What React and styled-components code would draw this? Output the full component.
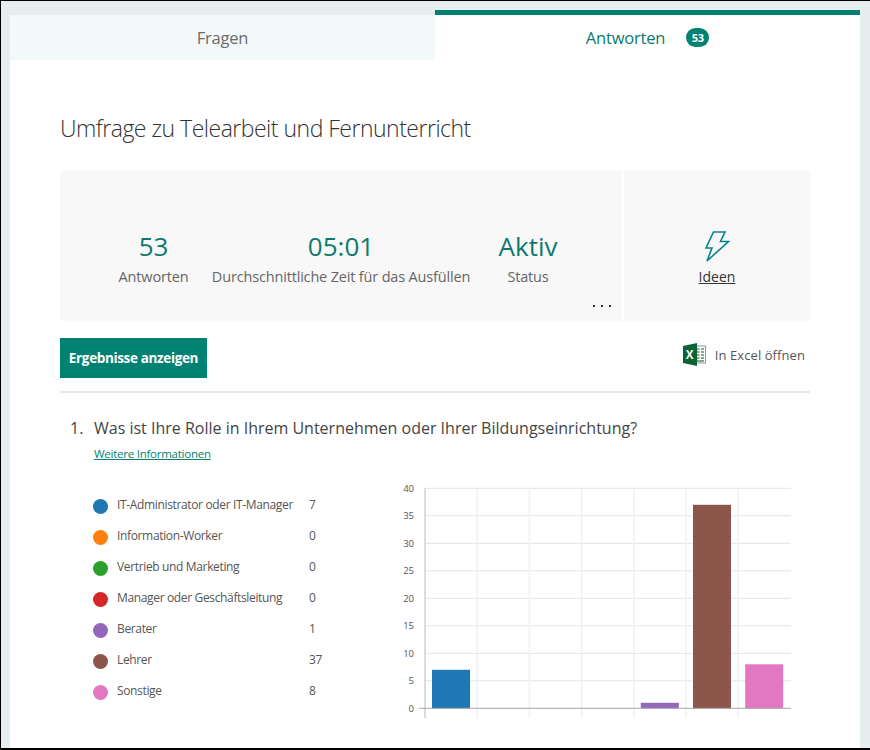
import React from 'react';
import styled, { createGlobalStyle } from 'styled-components';

const TEAL = '#008272';

const GlobalStyle = createGlobalStyle`
  html, body {
    margin: 0;
    padding: 0;
    height: 100%;
    overflow: hidden;
    background: #e6eef0;
  }
  * {
    box-sizing: border-box;
  }
`;

const Page = styled.div`
  width: 870px;
  height: 750px;
  overflow: hidden;
  padding: 9px 10px 0 9px;
  background: #e6eef0;
  border-top: 1px solid #000;
  border-left: 1px solid #000;
  border-bottom: 2px solid #000;
  font-family: 'Open Sans', 'Noto Sans', sans-serif;
  color: #333;
`;

const Tabs = styled.div`
  display: flex;
  height: 50px;
  align-items: flex-end;
`;

const Tab = styled.div`
  flex: 1;
  display: flex;
  align-items: center;
  justify-content: center;
  gap: 21px;
  height: ${(p) => (p.$active ? '50px' : '45px')};
  background: ${(p) => (p.$active ? '#fff' : '#f3f8f8')};
  border-top: ${(p) => (p.$active ? `5px solid ${TEAL}` : 'none')};
  color: ${(p) => (p.$active ? '#0d7a6d' : '#6b6b6b')};
  font-size: 16.5px;
  letter-spacing: -0.2px;
`;

const Badge = styled.span`
  width: 23px;
  height: 19px;
  border-radius: 10px;
  background: ${TEAL};
  color: #fff;
  font-size: 11px;
  font-weight: 700;
  letter-spacing: -0.3px;
  display: flex;
  align-items: center;
  justify-content: center;
`;

const Card = styled.main`
  background: #fff;
  height: 690px;
  padding: 51px 50px 0;
`;

const Title = styled.h1`
  margin: 0;
  font-size: 23px;
  font-weight: 300;
  line-height: 34px;
  letter-spacing: -0.5px;
  color: #333;
`;

const Summary = styled.section`
  display: flex;
  gap: 2px;
  height: 150px;
  margin-top: 26px;
`;

const Stats = styled.div`
  position: relative;
  width: 562px;
  background: #f8f8f8;
  display: flex;
  padding-top: 57px;
`;

const Stat = styled.div`
  width: ${(p) => p.$w}px;
  display: flex;
  flex-direction: column;
  align-items: center;
  white-space: nowrap;
`;

const StatValue = styled.div`
  font-size: 26px;
  line-height: 36px;
  color: #0d7a6d;
`;

const StatLabel = styled.div`
  font-size: 14.5px;
  line-height: 20px;
  margin-top: 3px;
  letter-spacing: -0.17px;
  color: #666;
`;

const More = styled.span`
  position: absolute;
  right: 11px;
  bottom: 14px;
  display: flex;
  gap: 6px;
  & i {
    width: 2px;
    height: 2px;
    background: #333;
  }
`;

const Ideas = styled.div`
  flex: 1;
  background: #f8f8f8;
  display: flex;
  flex-direction: column;
  align-items: center;
  padding-top: 59px;
`;

const IdeasLabel = styled.a`
  font-size: 14px;
  line-height: 18px;
  margin-top: 6px;
  color: #333;
  text-decoration: underline;
`;

const ActionRow = styled.div`
  display: flex;
  justify-content: space-between;
  align-items: center;
  height: 72px;
  padding-top: 17px;
  padding-bottom: 14px;
  border-bottom: 2px solid #e6e6e6;
`;

const PrimaryButton = styled.button`
  width: 147px;
  height: 40px;
  border: none;
  background: ${TEAL};
  color: #fff;
  font-family: inherit;
  font-size: 13.5px;
  font-weight: 700;
  letter-spacing: -0.35px;
  padding: 0;
`;

const ExcelLink = styled.div`
  display: flex;
  align-items: center;
  gap: 9px;
  margin-top: -6px;
  padding-right: 5px;
  font-size: 13px;
  letter-spacing: 0.08px;
  color: #555;
`;

const Question = styled.section`
  padding: 23px 0 0 10px;
`;

const QuestionTitle = styled.div`
  display: flex;
  font-size: 16px;
  line-height: 24px;
  color: #444;
`;

const QuestionNumber = styled.span`
  width: 24px;
`;

const MoreInfo = styled.a`
  display: block;
  margin: 6px 0 0 24px;
  font-size: 11.5px;
  line-height: 16px;
  letter-spacing: -0.25px;
  color: ${TEAL};
  text-decoration: underline;
`;

const Results = styled.div`
  display: flex;
  margin-top: 10px;
`;

const Legend = styled.ul`
  list-style: none;
  margin: 0;
  padding: 17px 0 0 23px;
  width: 318px;
`;

const LegendRow = styled.li`
  display: flex;
  align-items: center;
  height: 31px;
  font-size: 12px;
  letter-spacing: -0.35px;
  color: #555;
`;

const Dot = styled.span`
  width: 15px;
  height: 15px;
  border-radius: 50%;
  margin: 3px 9px 0 0;
  background: ${(p) => p.$color};
  flex: none;
`;

const LegendName = styled.span`
  width: 192px;
  white-space: nowrap;
`;

const ChartSvg = styled.svg`
  display: block;
  flex: none;
  margin-top: 8px;
`;

const ROLES = [
  { name: 'IT-Administrator oder IT-Manager', value: 7, color: '#1f77b4' },
  { name: 'Information-Worker', value: 0, color: '#ff7f0e' },
  { name: 'Vertrieb und Marketing', value: 0, color: '#2ca02c' },
  { name: 'Manager oder Geschäftsleitung', value: 0, color: '#d62728' },
  { name: 'Berater', value: 1, color: '#9467bd' },
  { name: 'Lehrer', value: 37, color: '#8c564b' },
  { name: 'Sonstige', value: 8, color: '#e377c2' },
];

// chart geometry, svg origin sits at x=388 y=480 of the page
const AXIS_X = 37;
const BASE_Y = 228.3;
const SLOT = 52.2;

const BarChart = () => (
  <ChartSvg width="410" height="250" viewBox="0 0 410 250">
    {[0, 5, 10, 15, 20, 25, 30, 35, 40].map((t) => {
      const y = BASE_Y - t * 5.5;
      return (
        <g key={t}>
          {t > 0 && <line x1={AXIS_X} x2="403" y1={y} y2={y} stroke="#e4e4e4" strokeWidth="1" />}
          <text x="26" y={y + 3.5} textAnchor="end" fontSize="9.5" fill="#555" fontFamily="Open Sans, sans-serif">
            {t}
          </text>
        </g>
      );
    })}
    {[0, 1, 2, 3, 4, 5, 6].map((i) => (
      <line
        key={i}
        x1={AXIS_X + i * SLOT}
        x2={AXIS_X + i * SLOT}
        y1={BASE_Y - 220}
        y2={BASE_Y + 10}
        stroke={i === 0 ? '#d0d0d0' : '#f0f0f0'}
        strokeWidth="1.5"
      />
    ))}
    {ROLES.map((r, i) => (
      <rect
        key={r.name}
        x={AXIS_X + 7 + i * SLOT}
        y={BASE_Y - r.value * 5.5}
        width="38"
        height={r.value * 5.5}
        fill={r.color}
      />
    ))}
    <line x1={AXIS_X - 6} x2="403" y1={BASE_Y} y2={BASE_Y} stroke="#a6a6a6" strokeWidth="1" />
  </ChartSvg>
);

const BoltIcon = () => (
  <svg width="26" height="32" viewBox="0 0 26 32" fill="none">
    <path
      d="M9.5 2 H21 L16.5 11.5 H24.5 L3 31 L8 18 H2 Z"
      stroke="#038387"
      strokeWidth="1.6"
      strokeLinejoin="miter"
    />
  </svg>
);

const ExcelIcon = () => (
  <svg width="23" height="23" viewBox="0 0 23 23">
    <rect x="12" y="3" width="10.5" height="17" fill="#fff" stroke="#7f9f8c" strokeWidth="1" />
    <path d="M14 6h2.5M18 6h3M14 9h2.5M18 9h3M14 12h2.5M18 12h3M14 15h2.5M18 15h3M14 18h7" stroke="#5c8a6f" strokeWidth="1.4" />
    <path d="M0 3 L14 0 V23 L0 20 Z" fill="#0a6332" />
    <text x="6.6" y="16" textAnchor="middle" fontSize="11.5" fontWeight="700" fill="#fff" fontFamily="Open Sans, sans-serif">
      X
    </text>
  </svg>
);

const App = () => (
  <Page>
    <GlobalStyle />
    <Tabs>
      <Tab>Fragen</Tab>
      <Tab $active>
        Antworten
        <Badge>53</Badge>
      </Tab>
    </Tabs>
    <Card>
      <Title>Umfrage zu Telearbeit und Fernunterricht</Title>
      <Summary>
        <Stats>
          <Stat $w={187}>
            <StatValue>53</StatValue>
            <StatLabel>Antworten</StatLabel>
          </Stat>
          <Stat $w={188}>
            <StatValue>05:01</StatValue>
            <StatLabel>Durchschnittliche Zeit für das Ausfüllen</StatLabel>
          </Stat>
          <Stat $w={186}>
            <StatValue>Aktiv</StatValue>
            <StatLabel>Status</StatLabel>
          </Stat>
          <More>
            <i />
            <i />
            <i />
          </More>
        </Stats>
        <Ideas>
          <BoltIcon />
          <IdeasLabel>Ideen</IdeasLabel>
        </Ideas>
      </Summary>
      <ActionRow>
        <PrimaryButton>Ergebnisse anzeigen</PrimaryButton>
        <ExcelLink>
          <ExcelIcon />
          In Excel öffnen
        </ExcelLink>
      </ActionRow>
      <Question>
        <QuestionTitle>
          <QuestionNumber>1.</QuestionNumber>
          Was ist Ihre Rolle in Ihrem Unternehmen oder Ihrer Bildungseinrichtung?
        </QuestionTitle>
        <MoreInfo>Weitere Informationen</MoreInfo>
        <Results>
          <Legend>
            {ROLES.map((r) => (
              <LegendRow key={r.name}>
                <Dot $color={r.color} />
                <LegendName>{r.name}</LegendName>
                {r.value}
              </LegendRow>
            ))}
          </Legend>
          <BarChart />
        </Results>
      </Question>
    </Card>
  </Page>
);

export default App;
